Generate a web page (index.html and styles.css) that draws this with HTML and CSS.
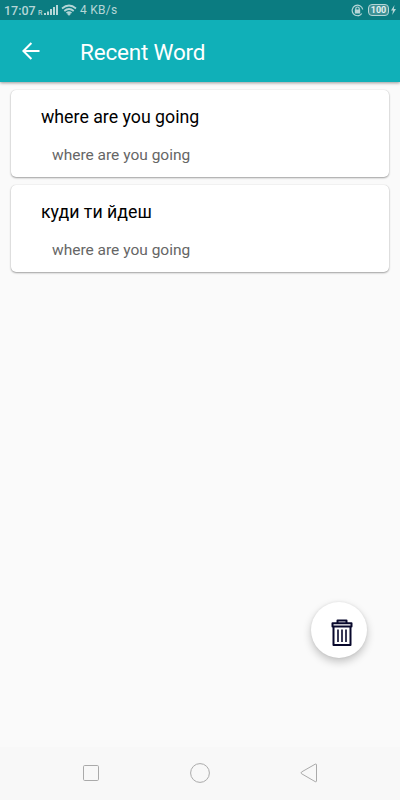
FILE: index.html
```html
<!DOCTYPE html>
<html lang="en">
<head>
<meta charset="utf-8">
<title>Recent Word</title>
<link rel="stylesheet" href="styles.css">
</head>
<body>
<div class="screen">
  <header class="top">
    <div class="status">
      <span class="clock">17:07</span>
      <span class="roaming">R</span>
      <svg class="signal" width="14" height="12" viewBox="0 0 14 12"><path d="M0 9h2v2H0zM3 7.500h2V11H3zM6 5h2v6H6zM9 3h2v8H9zM12 1h2v10h-2z"/></svg>
      <svg class="wifi" width="16" height="12" viewBox="0 0 16 12"><path d="M1 4.500Q8-1.500 15 4.500M3.300 7Q8 3 12.700 7M5.500 9Q8 7.300 10.500 9"/><circle cx="8" cy="10" r="1.100"/></svg>
      <span class="speed">4 KB/s</span>
      <svg class="lock" width="13" height="13" viewBox="0 0 13 13"><path class="ring" d="M10.800 9.500A5.300 5.300 0 1 1 11.700 5.500M7 11.800Q9 11.600 10.300 10.200"/><path class="shackle" d="M4.800 6V4.500Q4.800 3 6.500 3T8.200 4.500V6"/><path class="body" d="M3.800 5.500h5.400v4H3.800z"/></svg>
      <span class="battery">100</span>
      <svg class="bolt" width="5" height="10" viewBox="0 0 5 10"><path d="M3.500 0L0 5.500h2L1.200 10 5 4H2.800z"/></svg>
    </div>
    <div class="bar">
      <svg class="back" width="18" height="18" viewBox="0 0 18 18"><path d="M17.500 9H1.800M9.400 1L1.400 9l8 8"/></svg>
      <h1>Recent Word</h1>
    </div>
  </header>
  <main>
    <article class="card"><h2>where are you going</h2><p>where are you going</p></article>
    <article class="card"><h2 lang="uk">куди ти йдеш</h2><p>where are you going</p></article>
  </main>
  <button class="fab" aria-label="Clear">
    <svg width="22" height="28" viewBox="0 0 22 28"><path class="outer" d="M6.500 4V1.500h9V4M1.500 4.300h19v3.200h-19zM2.500 7.500v18.500h17V7.500"/><path class="ribs" d="M7 10.500v12.500M11 10.500v12.500M15 10.500v12.500"/></svg>
  </button>
  <nav>
    <svg width="18" height="18" viewBox="0 0 18 18"><rect x="1.500" y="1.500" width="15" height="15" rx="1.200"/></svg>
    <svg width="20" height="20" viewBox="0 0 20 20"><circle cx="10" cy="10" r="9.400"/></svg>
    <svg width="18" height="20" viewBox="0 0 18 20"><path d="M15.300 1.100L1.500 9Q.6 10 1.500 10.700l13.800 8Q16.500 19 16.500 18V2Q16.500.7 15.300 1.100z"/></svg>
  </nav>
</div>
</body>
</html>
```
FILE: styles.css
```css
body {
  margin: 0;
  font-family: Roboto, "Liberation Sans", sans-serif;
}

.screen {
  position: relative;
  display: flex;
  flex-direction: column;
  height: 800px;
  background: #fafafa;
}

.top {
  position: relative;
  background: #10b0b8;
  box-shadow: 0 1px 3px rgba(0, 0, 0, .4);
}

.status {
  display: flex;
  align-items: center;
  box-sizing: border-box;
  height: 20px;
  padding: 0 4px;
  background: #0b7c81;
  color: #b5d6d7;
  fill: #b5d6d7;
}

.clock {
  width: 34px;
  font-size: 12.5px;
  font-weight: 500;
}

.roaming {
  width: 6px;
  padding-top: 5px;
  font-size: 7px;
  font-weight: 500;
}

.wifi {
  margin-left: 3px;
  stroke: #b5d6d7;
}

.wifi path {
  fill: none;
  stroke-width: 1.7;
}

.speed {
  margin-left: 3px;
  font-size: 12px;
  letter-spacing: .25px;
}

.lock {
  margin-left: auto;
}

.ring,
.shackle {
  fill: none;
  stroke: #b5d6d7;
  stroke-width: 1.2;
}

.battery {
  box-sizing: border-box;
  width: 21px;
  height: 12px;
  margin-left: 4px;
  border: 1px solid #b5d6d7;
  border-radius: 4px;
  background: #3f9195;
  color: #e3f1f1;
  font-size: 9px;
  font-weight: 700;
  line-height: 10px;
  text-align: center;
}

.bolt {
  margin-left: 2px;
}

.bar {
  display: flex;
  align-items: center;
  height: 62px;
  padding-left: 22px;
}

.back {
  fill: none;
  stroke: #fff;
  stroke-width: 2;
}

h1 {
  margin: 1px 0 0 40px;
  color: #fff;
  font-size: 22.5px;
  font-weight: 400;
  letter-spacing: -.2px;
  line-height: 28px;
}

main {
  flex: 1;
  padding: 8px 11px 0;
}

.card {
  box-sizing: border-box;
  height: 87px;
  margin-bottom: 8px;
  padding: 15px 30px 0;
  border-radius: 5px;
  background: #fff;
  box-shadow: 0 1px 2px rgba(0, 0, 0, .36), 0 0 1px rgba(0, 0, 0, .16);
}

h2 {
  margin: 0;
  color: #000;
  font-size: 17.75px;
  font-weight: 400;
  line-height: 24px;
}

.card p {
  margin: 16px 0 0 11px;
  color: #666;
  font-size: 15.5px;
  line-height: 20px;
}

.fab {
  position: absolute;
  top: 602px;
  left: 311px;
  display: flex;
  align-items: center;
  justify-content: center;
  width: 56px;
  height: 56px;
  padding: 6px 0 0 6px;
  border: 0;
  border-radius: 50%;
  background: #fff;
  box-shadow: 0 4px 8px rgba(0, 0, 0, .22), 0 0 3px rgba(0, 0, 0, .08);
}

.outer,
.ribs {
  fill: none;
  stroke: #08082c;
  stroke-width: 2;
  stroke-linejoin: round;
}

.ribs {
  stroke-width: 1.6;
}

nav {
  display: flex;
  align-items: center;
  justify-content: space-between;
  box-sizing: border-box;
  height: 53px;
  padding: 0 82px 2px;
  background: #f8f8f8;
}

nav svg {
  fill: none;
  stroke: #aaa;
  stroke-width: 1;
}
```
